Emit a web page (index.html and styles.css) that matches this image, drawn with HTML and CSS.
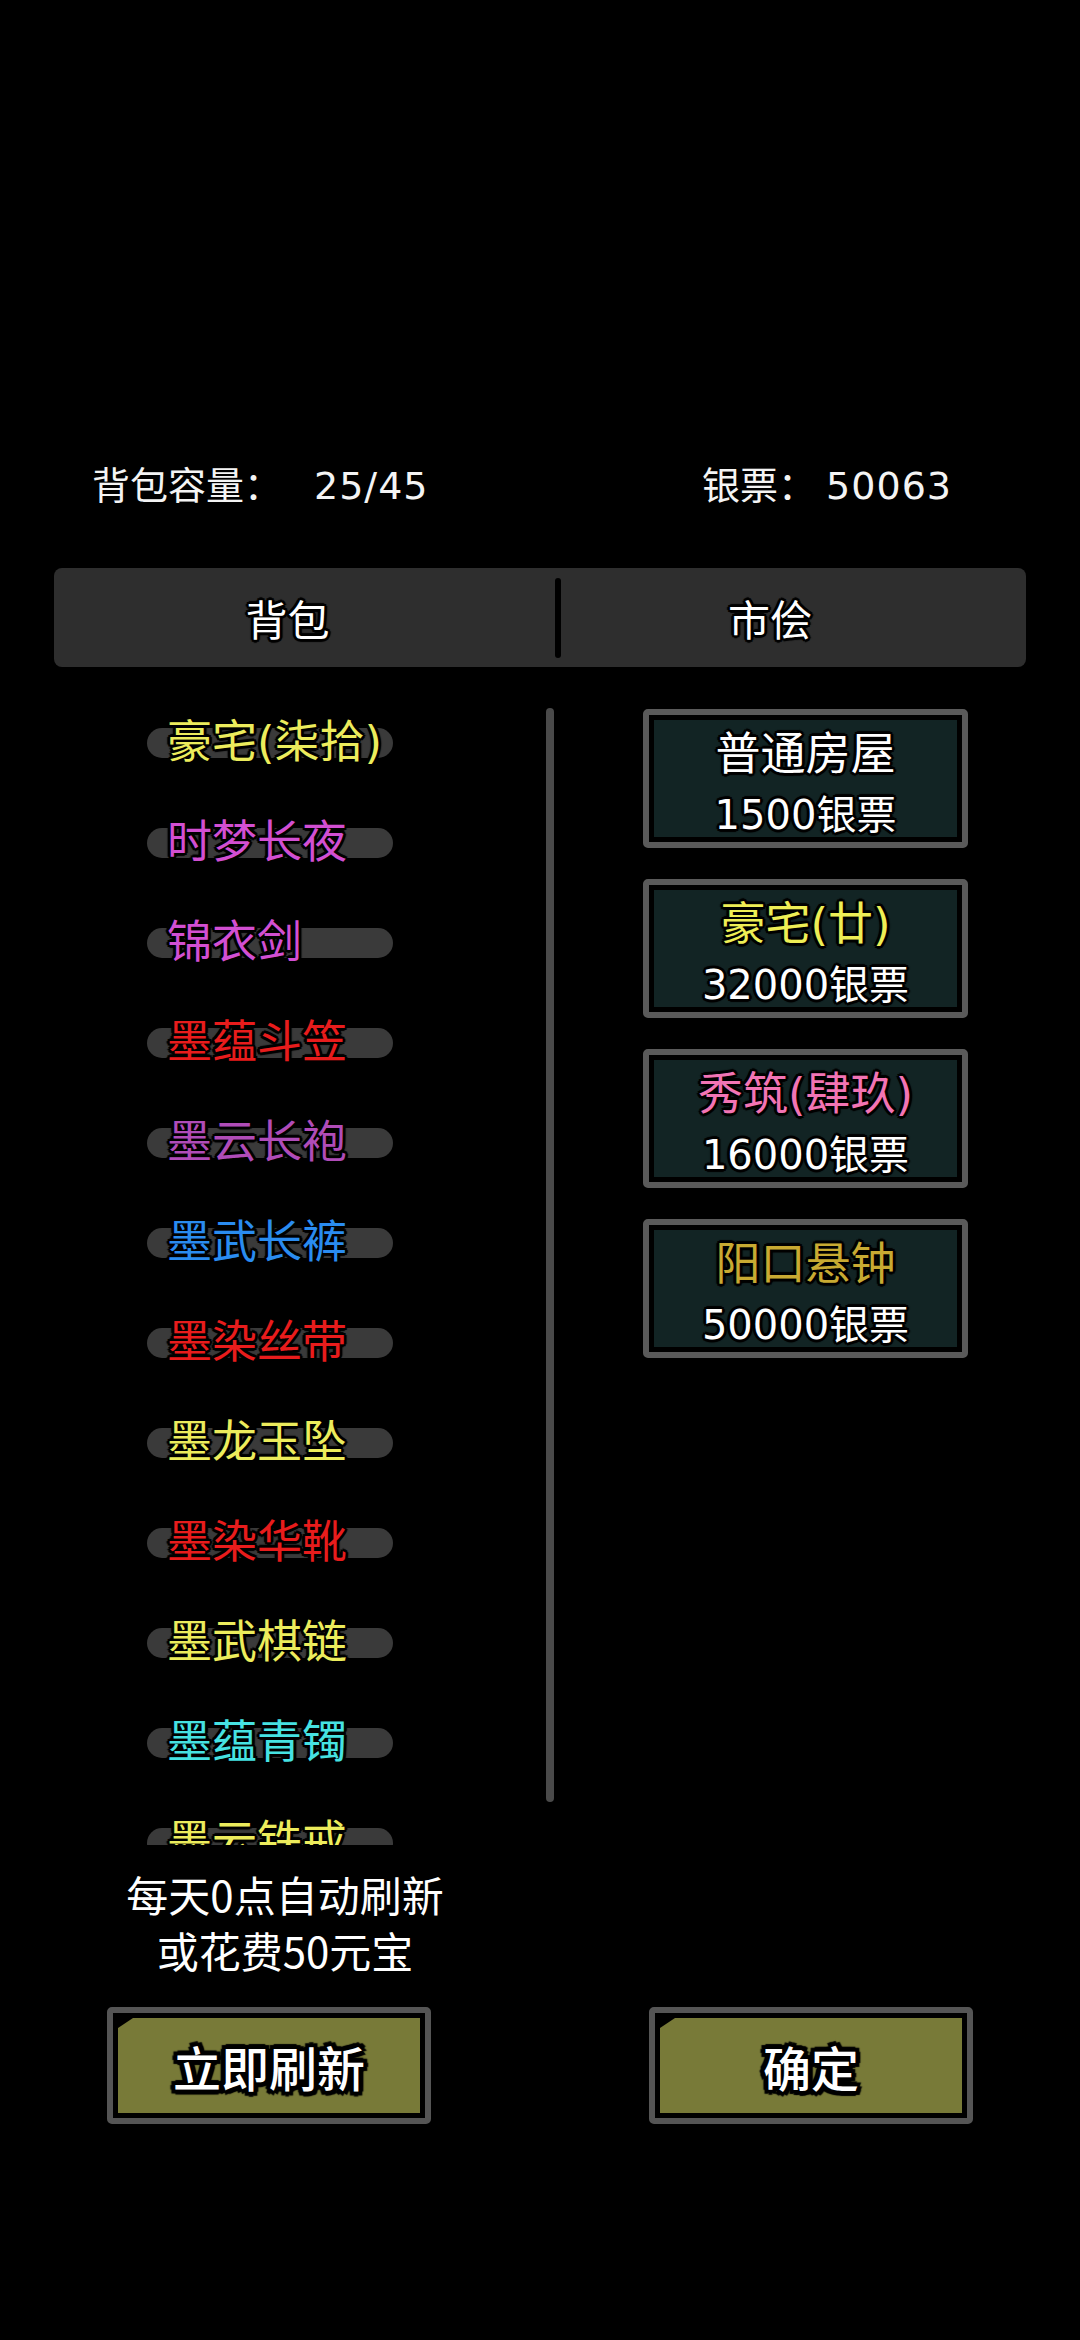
FILE: index.html
```html
<!DOCTYPE html>
<html lang="zh-CN">
<head>
<meta charset="utf-8">
<title>背包</title>
<link rel="stylesheet" href="styles.css">
</head>
<body>
<div class="page">
  <div class="stats">
    <span class="stat">背包容量：<span class="num num-gap">25/45</span></span>
    <span class="stat">银票：<span class="num num-gap-sm">50063</span></span>
  </div>

  <div class="tabs">
    <div class="tab tab-left ol">背包</div>
    <div class="tab-divider"></div>
    <div class="tab tab-right ol">市侩</div>
  </div>

  <div class="main">
    <div class="list">
      <div class="item"><span class="pill"></span><span class="name ol c-yellow">豪宅(柒拾)</span></div>
      <div class="item"><span class="pill"></span><span class="name ol c-magenta">时梦长夜</span></div>
      <div class="item"><span class="pill"></span><span class="name ol c-magenta">锦衣剑</span></div>
      <div class="item"><span class="pill"></span><span class="name ol c-red">墨蕴斗笠</span></div>
      <div class="item"><span class="pill"></span><span class="name ol c-purple">墨云长袍</span></div>
      <div class="item"><span class="pill"></span><span class="name ol c-blue">墨武长裤</span></div>
      <div class="item"><span class="pill"></span><span class="name ol c-red">墨染丝带</span></div>
      <div class="item"><span class="pill"></span><span class="name ol c-yellow">墨龙玉坠</span></div>
      <div class="item"><span class="pill"></span><span class="name ol c-red">墨染华靴</span></div>
      <div class="item"><span class="pill"></span><span class="name ol c-yellow">墨武棋链</span></div>
      <div class="item"><span class="pill"></span><span class="name ol c-cyan">墨蕴青镯</span></div>
      <div class="item"><span class="pill"></span><span class="name ol c-yellow">墨云铁戒</span></div>
      <div class="scrollbar"></div>
    </div>

    <div class="shop">
      <div class="card"><div class="card-fill">
        <div class="card-title ol c-white">普通房屋</div>
        <div class="card-price ol">1500银票</div>
      </div></div>
      <div class="card"><div class="card-fill">
        <div class="card-title ol c-yellow2">豪宅(廿)</div>
        <div class="card-price ol">32000银票</div>
      </div></div>
      <div class="card"><div class="card-fill">
        <div class="card-title ol c-pink">秀筑(肆玖)</div>
        <div class="card-price ol">16000银票</div>
      </div></div>
      <div class="card"><div class="card-fill">
        <div class="card-title ol c-gold">阳口悬钟</div>
        <div class="card-price ol">50000银票</div>
      </div></div>
    </div>
  </div>

  <div class="note">每天0点自动刷新<br>或花费50元宝</div>

  <div class="buttons">
    <div class="btn"><div class="btn-fill"><span class="btn-text ol-thick">立即刷新</span></div></div>
    <div class="btn"><div class="btn-fill"><span class="btn-text ol-thick">确定</span></div></div>
  </div>
</div>
</body>
</html>
```

FILE: styles.css
```css
* { box-sizing: border-box; }

html, body {
  margin: 0;
  padding: 0;
  background: #000;
}

body {
  width: 1080px;
  height: 2340px;
  overflow: hidden;
  font-family: "Noto Sans CJK SC", "Noto Sans", sans-serif;
  color: #fff;
}

.page {
  padding-top: 458px;
}

.ol {
  text-shadow:
    2px 0 0 #000, -2px 0 0 #000, 0 2px 0 #000, 0 -2px 0 #000,
    2px 2px 0 #000, -2px -2px 0 #000, 2px -2px 0 #000, -2px 2px 0 #000,
    3px 0 1px #000, -3px 0 1px #000, 0 3px 1px #000, 0 -3px 1px #000;
}

.ol-thick {
  text-shadow:
    3px 0 0 #000, -3px 0 0 #000, 0 3px 0 #000, 0 -3px 0 #000,
    3px 3px 0 #000, -3px -3px 0 #000, 3px -3px 0 #000, -3px 3px 0 #000,
    5px 0 1px #000, -5px 0 1px #000, 0 5px 1px #000, 0 -5px 1px #000,
    4px 4px 1px #000, -4px -4px 1px #000, 4px -4px 1px #000, -4px 4px 1px #000;
}

/* stats row */
.stats {
  display: flex;
  justify-content: space-between;
  align-items: center;
  height: 50px;
  padding: 0 128px 0 92px;
  font-size: 38px;
  line-height: 50px;
  color: #f4f4f4;
}

.stat {
  display: block;
  height: 50px;
  white-space: nowrap;
}

.num {
  font-family: "DejaVu Sans", "Noto Sans CJK SC", sans-serif;
  line-height: 1;
  letter-spacing: 1px;
}

.num-gap {
  margin-left: 32px;
}

.num-gap-sm {
  margin-left: 10px;
}

/* tabs */
.tabs {
  margin: 60px 0 0 54px;
  width: 972px;
  height: 99px;
  background: #2e2e2e;
  border-radius: 8px;
  display: flex;
  align-items: center;
}

.tab {
  font-size: 42px;
  line-height: 99px;
  text-align: center;
  color: #fff;
}

.tab-left { width: 467px; }
.tab-right { width: 418px; }

.tab-divider {
  margin-left: 34px;
  width: 6px;
  height: 80px;
  background: #000;
  border-radius: 3px;
}

/* main */
.main {
  margin-top: 26px;
  display: flex;
}

.list {
  position: relative;
  width: 560px;
  height: 1152px;
  overflow: hidden;
}

.item {
  height: 100px;
  display: grid;
  align-items: center;
}

.pill, .name {
  grid-area: 1 / 1;
}

.pill {
  margin-left: 147px;
  width: 246px;
  height: 30px;
  border-radius: 15px;
  background: #3a3a3a;
}

.name {
  margin-left: 167px;
  font-family: "DejaVu Sans", "Noto Sans CJK SC", sans-serif;
  font-size: 45px;
  line-height: 60px;
  white-space: nowrap;
}

.scrollbar {
  position: absolute;
  left: 546px;
  top: 15px;
  width: 8px;
  height: 1094px;
  border-radius: 4px;
  background: #4a4a4a;
}

.c-yellow { color: #ecec5c; }
.c-magenta { color: #d24fd2; }
.c-purple { color: #b04cb8; }
.c-red { color: #e81c1c; }
.c-blue { color: #2a8cf0; }
.c-cyan { color: #46e2e2; }
.c-white { color: #fff; }
.c-yellow2 { color: #eeee55; }
.c-pink { color: #f274b4; }
.c-gold { color: #c8aa32; }

/* shop */
.shop {
  margin-left: 83px;
  padding-top: 16px;
  display: flex;
  flex-direction: column;
  gap: 31px;
}

.card {
  width: 325px;
  height: 139px;
  border: 6px solid #5a5a5a;
  border-radius: 5px;
  background: #000;
  padding: 5px;
}

.card-fill {
  height: 117px;
  background: #122424;
  padding-top: 7px;
  text-align: center;
  overflow: hidden;
}

.card-title {
  font-family: "DejaVu Sans", "Noto Sans CJK SC", sans-serif;
  font-size: 45px;
  line-height: 56px;
  white-space: nowrap;
}

.card-price {
  margin-top: 9px;
  font-family: "DejaVu Sans", "Noto Sans CJK SC", sans-serif;
  font-size: 40px;
  line-height: 46px;
  color: #fff;
  white-space: nowrap;
}

/* note */
.note {
  margin-top: 21px;
  width: 570px;
  text-align: center;
  font-size: 42px;
  line-height: 56px;
  color: #fff;
}

/* buttons */
.buttons {
  margin-top: 29px;
  padding-left: 107px;
  display: flex;
  gap: 218px;
}

.btn {
  width: 324px;
  height: 117px;
  border: 6px solid #555;
  border-radius: 5px;
  background: #000;
  padding: 5px;
}

.btn-fill {
  height: 95px;
  background: #787a38;
  clip-path: polygon(15px 0, 100% 0, 100% 100%, 0 100%, 0 10px);
  display: flex;
  align-items: center;
  justify-content: center;
}

.btn-text {
  font-size: 48px;
  font-weight: 500;
  line-height: 60px;
  color: #fff;
}
```
